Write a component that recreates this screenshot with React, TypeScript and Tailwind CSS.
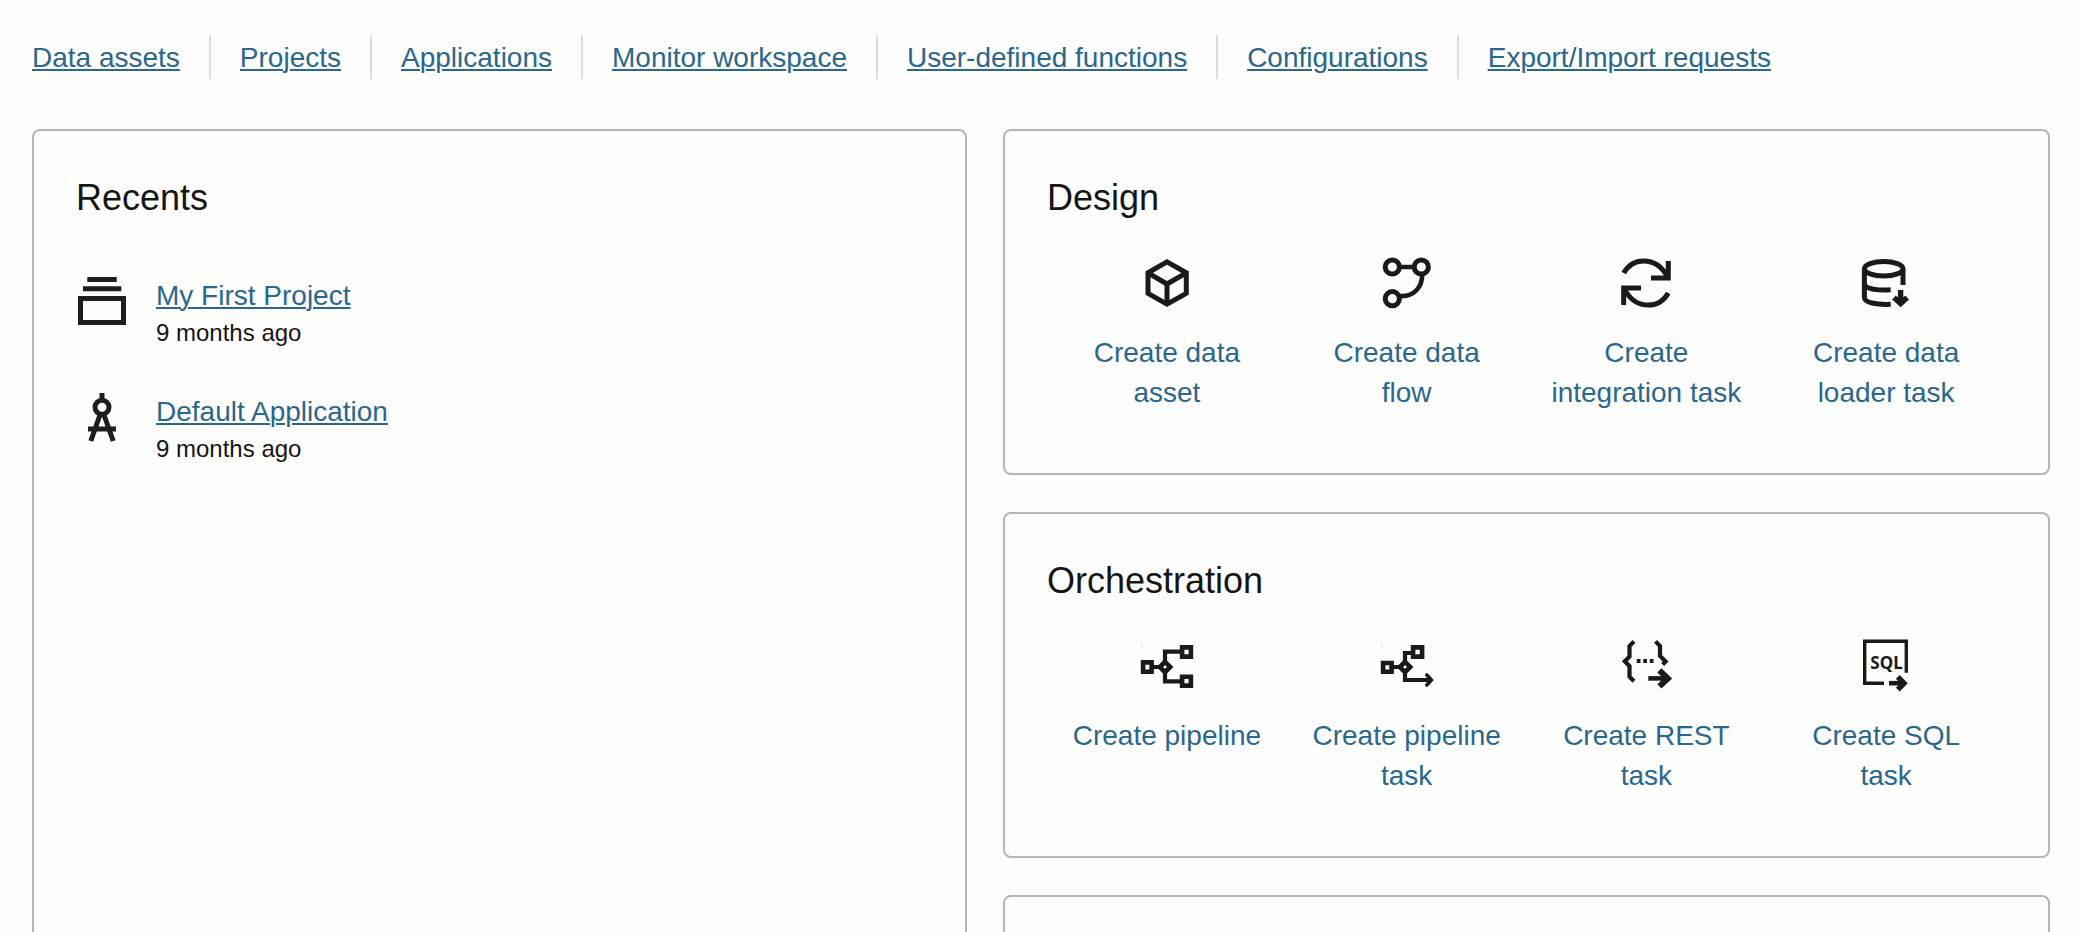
import type { ReactNode } from "react";

const navItems = [
  "Data assets",
  "Projects",
  "Applications",
  "Monitor workspace",
  "User-defined functions",
  "Configurations",
  "Export/Import requests",
];

function Icon({ children }: { children: ReactNode }) {
  return (
    <svg
      viewBox="0 0 48 48"
      className="size-12 overflow-visible text-[#1a1a1a]"
      fill="none"
      stroke="currentColor"
      strokeWidth="5"
      aria-hidden="true"
    >
      {children}
    </svg>
  );
}

function RecentIcon({ children }: { children: ReactNode }) {
  return (
    <svg
      viewBox="0 0 52 52"
      className="size-13 shrink-0 text-[#1e1e1e]"
      fill="none"
      stroke="currentColor"
      strokeWidth="5"
      aria-hidden="true"
    >
      {children}
    </svg>
  );
}

const projectIcon = (
  <RecentIcon>
    <path d="M11.3 4.4H40.7M7 13.8H45.3" />
    <path d="M4.5 23.5H47.5V47.5H4.5Z" />
  </RecentIcon>
);

const applicationIcon = (
  <RecentIcon>
    <path d="M26 2V9M12 38H40M24.3 23L14.8 50M27.7 23L37.2 50" />
    <circle cx="26" cy="16.3" r="7" />
  </RecentIcon>
);

const cubeIcon = (
  <Icon>
    <path d="M24 2.8L43.3 13.8V34.4L24 45.2L5 34.4V13.8Z" />
    <path d="M5 13.8L24 25L43.3 13.8M24 25V45" />
  </Icon>
);

const flowIcon = (
  <Icon>
    <circle cx="9.3" cy="8" r="7.1" />
    <circle cx="38.3" cy="8" r="7.1" />
    <circle cx="9.3" cy="39.7" r="7.1" />
    <path d="M16.4 8H31.2M39.2 15C39.5 28 31 38 17 37" strokeWidth="4.6" />
  </Icon>
);

const syncIcon = (
  <Icon>
    <path d="M1.7 14C6 6.5 13 1.9 21.3 1.9C33 1.9 41 9 45.5 18" />
    <path d="M46.3 2V19H29" />
    <path d="M46.3 34C42 41.5 35 46.1 26.7 46.1C15 46.1 7 39 2.5 30" />
    <path d="M1.7 46V29H19" />
  </Icon>
);

const loaderIcon = (
  <Icon>
    <ellipse cx="21.7" cy="9.7" rx="19.3" ry="7.3" />
    <path d="M2.4 9.7V38.5C2.4 43.5 14 46 28.7 45.3" />
    <path d="M2.4 25.5C4 30 16 31.5 28.7 30.8M41 9.7V26" />
    <path d="M38.6 31V43M32 38.6L38.6 44.6L45.2 38.6" strokeWidth="5.4" />
  </Icon>
);

const pipelineIcon = (
  <Icon>
    <path d="M-2 4H-1V5H-2Z" fill="#b5b5b5" stroke="none" />
    <path d="M10 25H16M37.5 9.7H22V39.4H37.5" strokeWidth="4.2" />
    <path d="M0.1 20.4H8.6V29.8H0.1ZM39.1 5.4H47.9V14.6H39.1ZM39.1 34.8H47.9V43.6H39.1Z" strokeWidth="4.6" />
    <path d="M22 19.8L27.2 25L22 30.2L16.8 25Z" fill="#fdfdfc" strokeWidth="4.6" />
  </Icon>
);

const pipelineTaskIcon = (
  <Icon>
    <path d="M-2 4H-1V5H-2Z" fill="#b5b5b5" stroke="none" />
    <path d="M10 25H16M28.5 11H22V38H47" strokeWidth="4.2" />
    <path d="M43.8 33L48.4 38L43.8 43" strokeWidth="3.6" strokeLinecap="round" />
    <path d="M0.1 21H8.6V29.8H0.1ZM30.1 5.4H39.1V14.6H30.1Z" strokeWidth="4.6" />
    <path d="M22 19.8L27.2 25L22 30.2L16.8 25Z" fill="#fdfdfc" strokeWidth="4.6" />
  </Icon>
);

const restIcon = (
  <Icon>
    <path
      d="M12 -0.6L7.5 4V14.7L2.8 19.3L7.5 24V34.7L12 39.2M33.5 -0.6L38 4V14L43.6 19.6L40.6 22.6"
      strokeWidth="4.2"
    />
    <path d="M14.8 19H18.5M21.3 19H25M27.8 19H31.5" strokeWidth="3.8" />
    <path d="M26.3 36.4H46" strokeWidth="4.6" />
    <path d="M37.4 28.4L45.8 36.4L37.4 44.4" strokeWidth="6" />
  </Icon>
);

const sqlIcon = (
  <Icon>
    <path d="M22 41.3H2.7V-0.7H44.3V30.7" strokeWidth="3.4" />
    <text
      x="24.5"
      y="26.7"
      textAnchor="middle"
      fill="currentColor"
      stroke="none"
      className="font-['Noto_Sans',sans-serif] text-[17px] font-bold"
    >
      SQL
    </text>
    <path d="M27 41.2H42" strokeWidth="4.6" />
    <path d="M35.8 34.8L42 41.2L35.8 47.6" strokeWidth="5.4" />
  </Icon>
);

const recents = [
  { name: "My First Project", when: "9 months ago", icon: projectIcon },
  { name: "Default Application", when: "9 months ago", icon: applicationIcon },
];

const designActions = [
  { label: "Create data asset", icon: cubeIcon },
  { label: "Create data flow", icon: flowIcon },
  { label: "Create integration task", icon: syncIcon },
  { label: "Create data loader task", icon: loaderIcon },
];

const orchestrationActions = [
  { label: "Create pipeline", icon: pipelineIcon },
  { label: "Create pipeline task", icon: pipelineTaskIcon },
  { label: "Create REST task", icon: restIcon },
  { label: "Create SQL task", icon: sqlIcon },
];

type Action = { label: string; icon: ReactNode };

function ActionCard({ title, actions }: { title: string; actions: Action[] }) {
  return (
    <section className="rounded-lg border-2 border-[#bab4ae] px-[42px] pt-[45px] pb-15">
      <h2 className="text-[36px] leading-11">{title}</h2>
      <div className="mt-[39px] grid grid-cols-4">
        {actions.map((action) => (
          <button
            key={action.label}
            type="button"
            className="flex cursor-pointer flex-col items-center gap-[26px] px-5 text-[28px] leading-10 text-[#2a678c]"
          >
            {action.icon}
            <span>{action.label}</span>
          </button>
        ))}
      </div>
    </section>
  );
}

export default function App() {
  return (
    <div className="flex h-screen flex-col overflow-hidden bg-[#fdfdfc] px-8 pt-[35px] font-['Liberation_Sans',Arial,sans-serif] text-[#161513]">
      <nav className="flex h-11 shrink-0 divide-x-2 divide-[#d6dde5] text-[28px] leading-[46px]">
        {navItems.map((item) => (
          <div key={item} className="px-[29px] first:pl-0">
            <a
              href="#"
              className="whitespace-nowrap text-[#2a678c] underline decoration-2 underline-offset-2"
            >
              {item}
            </a>
          </div>
        ))}
      </nav>

      <main className="mt-[50px] grid min-h-0 flex-1 grid-cols-[935fr_1047fr] gap-9">
        <section className="min-h-[1200px] rounded-lg border-2 border-[#bab4ae] px-[42px] pt-[45px]">
          <h2 className="text-[36px] leading-11">Recents</h2>
          <ul className="mt-[55px] flex flex-col gap-[42px]">
            {recents.map((recent) => (
              <li key={recent.name} className="flex items-start gap-7">
                {recent.icon}
                <div>
                  <a
                    href="#"
                    className="block text-[28px] leading-[42px] text-[#2a678c] underline decoration-2 underline-offset-2"
                  >
                    {recent.name}
                  </a>
                  <p className="text-[24px] leading-8">{recent.when}</p>
                </div>
              </li>
            ))}
          </ul>
        </section>

        <div className="flex flex-col gap-[37px]">
          <ActionCard title="Design" actions={designActions} />
          <ActionCard title="Orchestration" actions={orchestrationActions} />
          <section className="min-h-[346px] rounded-lg border-2 border-[#bab4ae]" />
        </div>
      </main>
    </div>
  );
}
